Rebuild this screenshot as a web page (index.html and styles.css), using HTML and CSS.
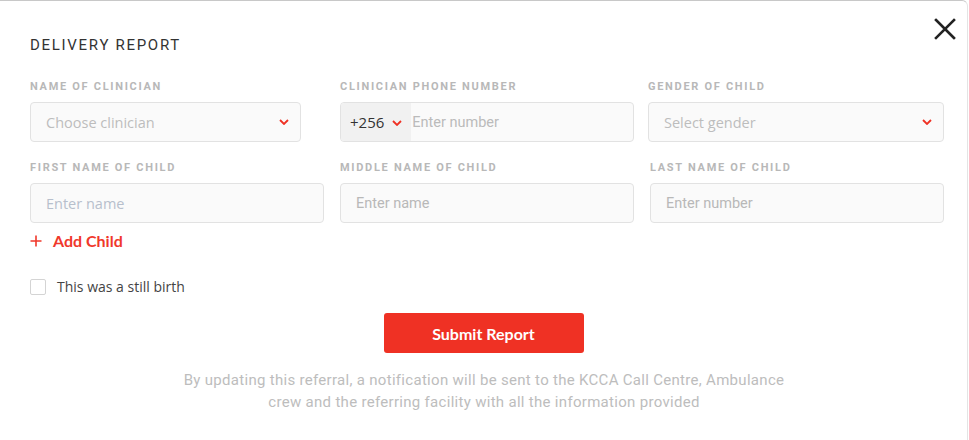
FILE: index.html
```html
<!DOCTYPE html>
<html>
<head>
<meta charset="utf-8">
<link rel="stylesheet" href="styles.css">
</head>
<body>
<div class="modal">
  <button class="close" aria-label="Close">
    <svg width="22" height="22" viewBox="0 0 22 22"><path d="M2 2 L20 20 M20 2 L2 20" stroke="#222" stroke-width="2.6" stroke-linecap="square"/></svg>
  </button>
  <h1 class="title">DELIVERY REPORT</h1>
  <div class="grid">
    <div class="field">
      <label class="label">NAME OF CLINICIAN</label>
      <div class="input select narrow"><span class="ph">Choose clinician</span><svg class="chev" width="10" height="6" viewBox="0 0 10 6"><path d="M1 1 L5 5 L9 1" fill="none" stroke="#ef3124" stroke-width="1.8"/></svg></div>
    </div>
    <div class="field">
      <label class="label">CLINICIAN PHONE NUMBER</label>
      <div class="input phone">
        <div class="code"><span>+256</span><svg class="chev" width="10" height="6" viewBox="0 0 10 6"><path d="M1 1 L5 5 L9 1" fill="none" stroke="#ef3124" stroke-width="1.8"/></svg></div>
        <span class="ph">Enter number</span>
      </div>
    </div>
    <div class="field shift">
      <label class="label">GENDER OF CHILD</label>
      <div class="input select"><span class="ph">Select gender</span><svg class="chev" width="10" height="6" viewBox="0 0 10 6"><path d="M1 1 L5 5 L9 1" fill="none" stroke="#ef3124" stroke-width="1.8"/></svg></div>
    </div>
    <div class="field">
      <label class="label">FIRST NAME OF CHILD</label>
      <div class="input"><span class="ph blue">Enter name</span></div>
    </div>
    <div class="field">
      <label class="label">MIDDLE NAME OF CHILD</label>
      <div class="input"><span class="ph cond">Enter name</span></div>
    </div>
    <div class="field">
      <label class="label">LAST NAME OF CHILD</label>
      <div class="input"><span class="ph cond">Enter number</span></div>
    </div>
  </div>
  <div class="add"><svg class="plus" width="12" height="12" viewBox="0 0 12 12"><path d="M6 0.5 V11.5 M0.5 6 H11.5" stroke="#f0382b" stroke-width="1.6"/></svg>Add Child</div>
  <label class="check"><span class="box"></span>This was a still birth</label>
  <div class="actions"><button class="submit">Submit Report</button></div>
  <p class="note">By updating this referral, a notification will be sent to the KCCA Call Centre, Ambulance<br>crew and the referring facility with all the information provided</p>
</div>
</body>
</html>
```

FILE: styles.css
```css
html, body { margin: 0; padding: 0; background: #fff; }
body { width: 969px; height: 440px; overflow: hidden; font-family: "Lato", "Open Sans", sans-serif; }
.modal {
  position: relative;
  box-sizing: border-box;
  width: 968px;
  height: 440px;
  border-top: 1px solid #c8c8c8;
  border-right: 1px solid #e4e4e4;
  border-top-right-radius: 6px;
  padding: 35px 23px 0 30px;
}
.close {
  position: absolute; top: 17px; right: 11px;
  background: none; border: 0; padding: 0; width: 22px; height: 22px; cursor: pointer;
}
.close svg { display: block; }
.title {
  margin: 0; font-family: "Roboto", sans-serif; font-weight: 400; font-size: 15px; line-height: 18px;
  letter-spacing: 1.7px; color: #333;
}
.grid {
  margin-top: 26px;
  display: grid; grid-template-columns: repeat(3, 1fr); column-gap: 16px; row-gap: 19px;
}
.label {
  display: block; font-family: "Roboto", sans-serif; font-weight: 700; font-size: 11px; line-height: 14px;
  letter-spacing: 1.7px; color: #b8b8b8; margin-bottom: 8px;
}
.input {
  box-sizing: border-box; height: 40px; border: 1px solid #e2e2e2; border-radius: 4px; background: #fafafa;
  display: flex; align-items: center; padding: 0 15px; font-size: 14px;
}
.input.narrow { width: 271px; }
.select { justify-content: space-between; padding-right: 11px; }
.shift { margin-left: -2px; }
.ph { color: #bdbdbd; font-family: "Open Sans", sans-serif; font-size: 14.5px; }
.ph.blue { color: #b7bfcc; }
.ph.cond { font-family: "Roboto", sans-serif; color: #b8b8b8; }
.chev { display: block; }
.phone { padding: 0; overflow: hidden; }
.code {
  height: 100%; display: flex; align-items: center; gap: 8px; padding: 0 9px 0 9px;
  background: #f1f1f1; color: #333; font-family: "Open Sans", sans-serif; font-size: 15px;
  margin-right: 1px;
}
.code svg { margin-top: 1px; }
.phone .ph { font-family: "Roboto", sans-serif; color: #bbb; font-size: 14.5px; }
.add {
  margin-top: 9px; display: flex; align-items: center; gap: 11px; color: #f0382b; font-weight: 700; font-size: 16px; line-height: 18px;
}
.plus { display: block; }
.check {
  margin-top: 28px; display: flex; align-items: center; gap: 11px; font-family: "Open Sans", sans-serif; font-size: 14px; color: #444; line-height: 18px;
}
.box { width: 14px; height: 14px; border: 1px solid #d4d4d4; border-radius: 2px; background: #fff; }
.actions { margin-top: 17px; display: flex; justify-content: center; padding-right: 7px; }
.submit {
  width: 200px; height: 40px; border: 0; border-radius: 3px; background: #ef3124; color: #fff;
  font-family: "Lato", sans-serif; font-weight: 700; font-size: 16px; cursor: pointer;
}
.note {
  margin: 16px 0 0; text-align: center; font-family: "Roboto", sans-serif; font-size: 15px; letter-spacing: 0.3px; line-height: 22px; color: #bdbdbd;
  padding-right: 6px;
}
```
